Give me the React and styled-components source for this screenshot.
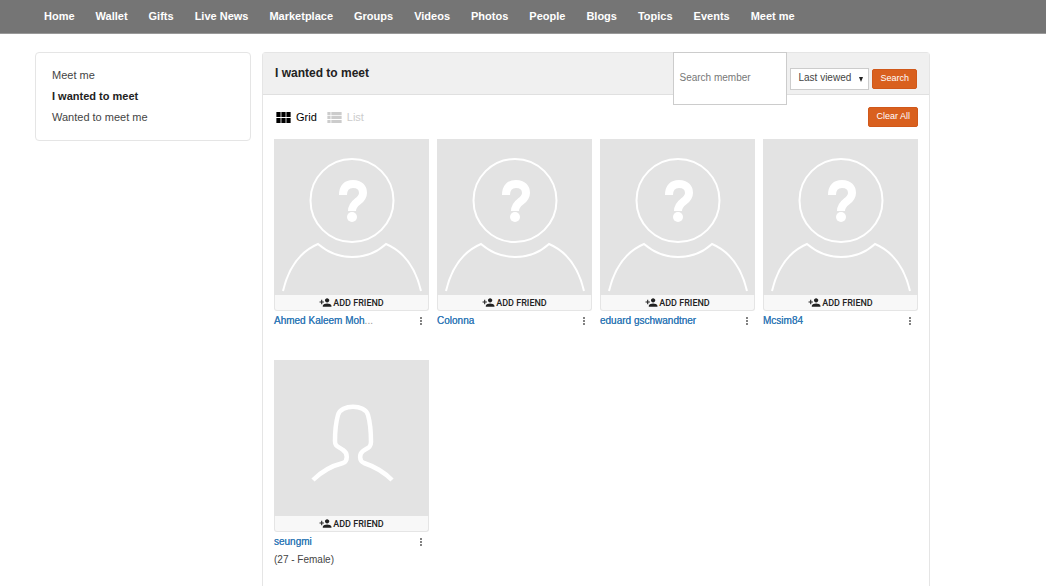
import React, { useState } from "react";
import styled, { createGlobalStyle } from "styled-components";
import { MdPersonAdd, MdMoreVert, MdViewModule, MdViewList } from "react-icons/md";

const GlobalStyle = createGlobalStyle`
  * {
    box-sizing: border-box;
  }
  body {
    margin: 0;
    background: #fff;
    color: #444;
    font-family: "Liberation Sans", Arial, sans-serif;
    font-size: 11px;
  }
  button, input, select {
    font-family: inherit;
  }
`;

const Nav = styled.nav`
  display: flex;
  gap: 21px;
  height: 34px;
  padding: 0 44px 2px;
  align-items: center;
  background: #757575;
  border-bottom: 1px solid #999;
`;

const NavLink = styled.a`
  color: #fff;
  font-size: 11px;
  font-weight: bold;
  line-height: 14px;
  white-space: nowrap;
  text-decoration: none;
`;

const Page = styled.div`
  display: flex;
  align-items: flex-start;
  gap: 11px;
  padding: 18px 116px 0 35px;
`;

const Sidebar = styled.aside`
  flex: 0 0 216px;
  padding: 12px 16px;
  border: 1px solid #e5e5e5;
  border-radius: 4px;
`;

const SideLink = styled.a`
  display: block;
  color: ${(props) => (props.$active ? "#222" : "#444")};
  font-weight: ${(props) => (props.$active ? "bold" : "normal")};
  line-height: 21px;
  text-decoration: none;
`;

const Main = styled.main`
  flex: 1;
  min-width: 0;
  border: 1px solid #e5e5e5;
  border-bottom: none;
  border-radius: 4px 4px 0 0;
`;

const Header = styled.header`
  display: flex;
  justify-content: space-between;
  height: 42px;
  padding: 0 12px;
  background: #f0f0f0;
  border-bottom: 1px solid #e0e0e0;
`;

const Title = styled.h1`
  margin: 0;
  color: #222;
  font-size: 12px;
  line-height: 41px;
`;

const Search = styled.form`
  display: flex;
  align-items: center;
  height: 51px;
  gap: 3px;
`;

const SearchInput = styled.input`
  width: 114px;
  height: 53px;
  padding: 0 5px 2px;
  border: 1px solid #ccc;
  background: #fff;
  font-size: 10px;

  &::placeholder {
    color: #777;
    opacity: 1;
  }
`;

const SelectWrap = styled.div`
  position: relative;

  &::after {
    content: "";
    position: absolute;
    top: 9px;
    right: 6px;
    border: 2px solid transparent;
    border-top: 5px solid #222;
    pointer-events: none;
  }
`;

const Select = styled.select`
  display: block;
  width: 79px;
  height: 22px;
  padding: 0 7px 2px;
  border: 1px solid #ccc;
  border-radius: 0;
  background: #fff;
  color: #444;
  font-size: 10px;
  appearance: none;
`;

const Button = styled.button`
  height: 20px;
  padding: 0 7px 2px;
  border: 1px solid #d0581a;
  border-radius: 2px;
  background: #d9601e;
  color: #fff;
  font-size: 9px;
  line-height: 16px;
  white-space: nowrap;
`;

const Toolbar = styled.div`
  display: flex;
  align-items: center;
  gap: 8px;
  padding: 12px 11px;
`;

const Mode = styled.button`
  display: flex;
  align-items: center;
  gap: 3px;
  padding: 0;
  border: none;
  background: none;
  color: ${(props) => (props.$active ? "#000" : "#ccc")};
  font-size: 11px;
  line-height: 20px;
`;

const Spacer = styled.div`
  flex: 1;
`;

const Grid = styled.ul`
  display: grid;
  grid-template-columns: repeat(4, 1fr);
  grid-auto-rows: minmax(221px, auto);
  gap: 0 8px;
  margin: 0;
  padding: 0 11px 20px;
  list-style: none;
`;

const Card = styled.li`
  min-width: 0;
`;

const Avatar = styled.svg`
  display: block;
  width: 100%;
  aspect-ratio: 155 / 156;
  background: #e3e3e3;
`;

const AddFriend = styled.button`
  display: flex;
  align-items: center;
  justify-content: center;
  gap: 1px;
  width: 100%;
  height: 16px;
  padding: 0;
  border: 1px solid #e5e5e5;
  border-top: none;
  border-radius: 0 0 3px 3px;
  background: #f8f8f8;
  color: #222;
  font-family: Roboto, sans-serif;
  font-size: 9px;
  font-weight: 500;
`;

const NameRow = styled.div`
  display: flex;
  align-items: center;
  justify-content: space-between;
  height: 20px;
`;

const Name = styled.a`
  color: #337ab7;
  font-size: 10px;
  line-height: 20px;
  text-decoration: none;
  text-shadow: 0 0 0 #337ab7;
  white-space: nowrap;
`;

const Dots = styled.span`
  color: #999;
  text-shadow: none;
`;

const More = styled.button`
  display: flex;
  padding: 0 2px;
  border: none;
  background: none;
  color: #666;
`;

const Details = styled.div`
  font-size: 10px;
  line-height: 15px;
`;

const links = [
  "Home", "Wallet", "Gifts", "Live News", "Marketplace", "Groups", "Videos",
  "Photos", "People", "Blogs", "Topics", "Events", "Meet me",
];

const sections = ["Meet me", "I wanted to meet", "Wanted to meet me"];

const members = [
  { name: "Ahmed Kaleem Moh", shortened: true },
  { name: "Colonna" },
  { name: "eduard gschwandtner" },
  { name: "Mcsim84" },
  { name: "seungmi", details: "(27 - Female)", female: true },
];

function UnknownAvatar() {
  return (
    <Avatar viewBox="0 0 155 156" fill="none" stroke="#fff" aria-hidden="true">
      <circle cx="78" cy="61.5" r="41.5" strokeWidth="2" />
      <path d="M9 152C14 131 25 113 44 105Q59 118 78 118Q98 118 112 105C131 113 142 131 147 152" strokeWidth="2" />
      <path d="M69 56C69 48 73 45 79 45C86 45 89 49 89 54C89 63 78 62 78 72" strokeWidth="8" />
      <circle cx="78" cy="78" r="5" fill="#fff" stroke="none" />
    </Avatar>
  );
}

function FemaleAvatar() {
  return (
    <Avatar viewBox="0 0 155 156" fill="none" stroke="#fff" strokeWidth="4.5" aria-hidden="true">
      <path d="M39 120C47 112 57 106 69 103C74 101 74 93 69 90C64 86 61 87 61 81C61 71 62 62 64 55C67 44 91 44 94 55C96 62 97 72 97 82C97 88 93 88 89 91C85 94 85 101 90 103C102 107 110 112 118 120" />
    </Avatar>
  );
}

function Member({ member }) {
  return (
    <Card>
      {member.female ? <FemaleAvatar /> : <UnknownAvatar />}
      <AddFriend type="button">
        <MdPersonAdd size={13} />
        ADD FRIEND
      </AddFriend>
      <NameRow>
        <Name href="#">
          {member.name}
          {member.shortened && <Dots>...</Dots>}
        </Name>
        <More type="button" aria-label={`More options for ${member.name}`}>
          <MdMoreVert size={12} />
        </More>
      </NameRow>
      {member.details && <Details>{member.details}</Details>}
    </Card>
  );
}

export default function App() {
  const [mode, setMode] = useState("grid");

  return (
    <>
      <GlobalStyle />
      <Nav>
        {links.map((link) => (
          <NavLink href="#" key={link}>{link}</NavLink>
        ))}
      </Nav>
      <Page>
        <Sidebar>
          {sections.map((section) => (
            <SideLink href="#" key={section} $active={section === "I wanted to meet"}>
              {section}
            </SideLink>
          ))}
        </Sidebar>
        <Main>
          <Header>
            <Title>I wanted to meet</Title>
            <Search onSubmit={(e) => e.preventDefault()}>
              <SearchInput type="text" placeholder="Search member" aria-label="Search member" />
              <SelectWrap>
                <Select aria-label="Sort by">
                  <option>Last viewed</option>
                </Select>
              </SelectWrap>
              <Button type="submit">Search</Button>
            </Search>
          </Header>
          <Toolbar>
            <Mode type="button" $active={mode === "grid"} onClick={() => setMode("grid")}>
              <MdViewModule size={19} />
              Grid
            </Mode>
            <Mode type="button" $active={mode === "list"} onClick={() => setMode("list")}>
              <MdViewList size={19} />
              List
            </Mode>
            <Spacer />
            <Button type="button">Clear All</Button>
          </Toolbar>
          <Grid>
            {members.map((member) => (
              <Member key={member.name} member={member} />
            ))}
          </Grid>
        </Main>
      </Page>
    </>
  );
}
